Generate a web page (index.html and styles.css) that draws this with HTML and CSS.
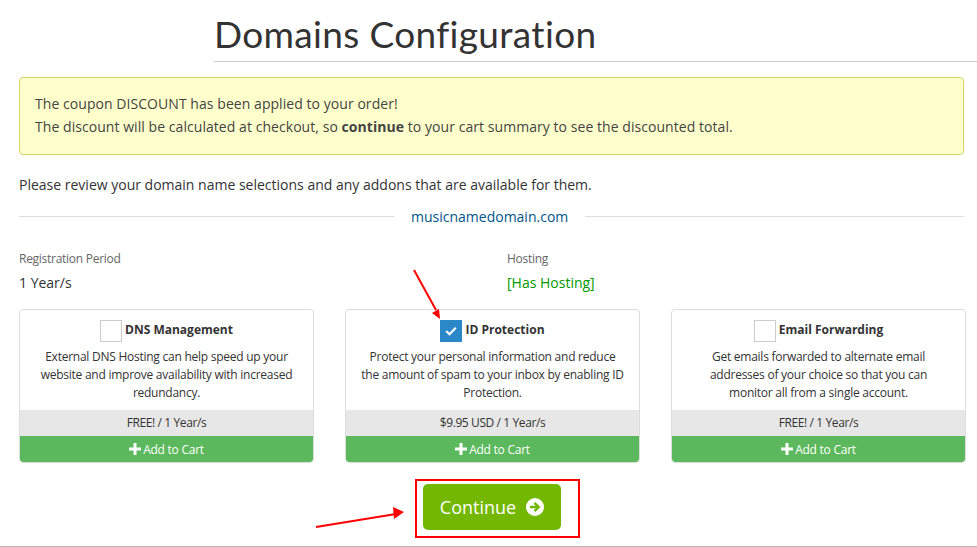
FILE: index.html
```html
<!DOCTYPE html>
<html lang="en">
<head>
<meta charset="utf-8">
<title>Domains Configuration</title>
<link rel="stylesheet" href="styles.css">
</head>
<body>
<div class="page">
  <header class="head"><h1>Domains Configuration</h1></header>
  <main class="main">
    <div class="alert">
      <div>The coupon DISCOUNT has been applied to your order!</div>
      <div>The discount will be calculated at checkout, so <b>continue</b> to your cart summary to see the discounted total.</div>
    </div>
    <p class="intro">Please review your domain name selections and any addons that are available for them.</p>
    <div class="domain"><span>musicnamedomain.com</span></div>
    <div class="fields">
      <div class="field"><div class="lbl">Registration Period</div><div class="val">1 Year/s</div></div>
      <div class="field"><div class="lbl">Hosting</div><div class="val green">[Has Hosting]</div></div>
    </div>
    <div class="cards">
      <div class="card">
        <div class="body">
          <div class="title"><span class="box"></span><b>DNS Management</b></div>
          <div class="desc">External DNS Hosting can help speed up your website and improve availability with increased redundancy.</div>
        </div>
        <div class="price">FREE! / 1 Year/s</div>
        <div class="add"><svg class="plus" viewBox="0 0 12 12"><path d="M4.5 0h3v4.5H12v3H7.500V12h-3V7.500H0v-3h4.500z"/></svg>Add to Cart</div>
      </div>
      <div class="card">
        <div class="body">
          <div class="title"><span class="box on"><svg viewBox="0 0 12 10"><path d="M1.200 5l3.300 3.200 6.300-6.400" fill="none" stroke="#fff" stroke-width="2.200"/></svg></span><b>ID Protection</b></div>
          <div class="desc">Protect your personal information and reduce the amount of spam to your inbox by enabling ID Protection.</div>
        </div>
        <div class="price">$9.95 USD / 1 Year/s</div>
        <div class="add"><svg class="plus" viewBox="0 0 12 12"><path d="M4.5 0h3v4.5H12v3H7.500V12h-3V7.500H0v-3h4.500z"/></svg>Add to Cart</div>
      </div>
      <div class="card">
        <div class="body">
          <div class="title"><span class="box"></span><b>Email Forwarding</b></div>
          <div class="desc">Get emails forwarded to alternate email addresses of your choice so that you can monitor all from a single account.</div>
        </div>
        <div class="price">FREE! / 1 Year/s</div>
        <div class="add"><svg class="plus" viewBox="0 0 12 12"><path d="M4.5 0h3v4.5H12v3H7.500V12h-3V7.500H0v-3h4.500z"/></svg>Add to Cart</div>
      </div>
    </div>
    <div class="actions">
      <a class="continue">Continue<svg class="go" viewBox="0 0 18 18"><circle cx="9" cy="9" r="9" fill="#fff"/><path d="M4 9h8.500M8.500 4.800L12.700 9l-4.200 4.200" fill="none" stroke="#73b700" stroke-width="2.400"/></svg></a>
    </div>
  </main>
  <svg class="marks" viewBox="0 0 977 547" width="977" height="547">
    <path d="M414 270L436 310" stroke="#f00" stroke-width="2" fill="none"/>
    <path d="M440 319l-8-6 7-4z" fill="#f00"/>
    <path d="M316 527L396 514" stroke="#f00" stroke-width="2" fill="none"/>
    <path d="M404 512l-11-5 1 12z" fill="#f00"/>
    <rect x="416" y="480" width="163" height="57" fill="none" stroke="#f00" stroke-width="2"/>
  </svg>
</div>
</body>
</html>
```
FILE: styles.css
```css
* { box-sizing: border-box; }
html, body { margin: 0; padding: 0; background: #fff; }
body { font-family: "Open Sans", "Liberation Sans", sans-serif; font-size: 14px; color: #333; overflow: hidden; }
.page { position: relative; width: 977px; height: 547px; overflow: hidden; border-bottom: 1px solid #b5b5b5; }
.head { margin-left: 214px; height: 62px; border-bottom: 1px solid #ccc; }
h1 { margin: 0; padding: 12px 0 0; font-family: "Lato", sans-serif; font-weight: 400; font-size: 37px; line-height: 44px; color: #333; letter-spacing: 0.35px; }
.main { padding: 15px 13px 0 19px; }
.alert { height: 78px; padding: 14px 15px; line-height: 23px; background: #ffc; border: 1px solid #d6d26a; border-radius: 4px; color: #444; letter-spacing: 0.055px; }
.alert b { font-weight: 700; }
.intro { margin: 20px 0 0; line-height: 20px; font-weight: 500; font-size: 14px; color: #333; }
.domain { display: flex; align-items: center; margin-top: 11px; height: 20px; color: #058; font-size: 14px; font-weight: 500; gap: 17px; }
.domain::before, .domain::after { content: ""; height: 1px; background: #ddd; }
.domain::before { width: 375px; }
.domain::after { flex: 1; }
.fields { display: flex; margin-top: 24px; }
.field { flex: none; width: 488px; }
.lbl { font-size: 12px; line-height: 18px; color: #666; letter-spacing: -0.27px; }
.val { margin-top: 5px; font-size: 14px; line-height: 20px; color: #333; }
.green { color: #090; }
.cards { display: flex; gap: 31px; margin-top: 16px; }
.card { flex: none; width: 295px; height: 154px; border: 1px solid #ddd; border-radius: 4px; display: flex; flex-direction: column; overflow: hidden; }
.body { flex: 1; padding: 10px 15px 0; text-align: center; }
.title { display: flex; justify-content: center; align-items: center; height: 22px; gap: 3px; font-size: 12px; }
.title b { font-weight: 700; color: #333; padding-bottom: 3px; }
.box { width: 22px; height: 22px; border: 1px solid #ccc; background: #fff; display: flex; align-items: center; justify-content: center; }
.box.on { background: #2a87c8; border-color: #2a87c8; }
.box svg { width: 12px; height: 10px; }
.desc { margin-top: 6px; font-size: 12px; line-height: 18px; color: #333; letter-spacing: -0.25px; }
.price { height: 26px; line-height: 25px; background: #e7e7e7; text-align: center; font-size: 12px; color: #333; letter-spacing: -0.4px; }
.add { height: 26px; background: #5cb85c; color: #fff; font-size: 12px; display: flex; align-items: center; justify-content: center; gap: 2px; border-radius: 0 0 3px 3px; letter-spacing: -0.25px; }
.plus { width: 12px; height: 12px; fill: #fff; }
.actions { display: flex; justify-content: center; margin-top: 21px; }
.continue { display: flex; align-items: center; justify-content: center; gap: 10px; width: 138px; height: 46px; background: #73b700; color: #fff; font-size: 18px; border-radius: 5px; margin-left: 1px; }
.go { width: 18px; height: 18px; }
.marks { position: absolute; left: 0; top: 0; pointer-events: none; }
```
